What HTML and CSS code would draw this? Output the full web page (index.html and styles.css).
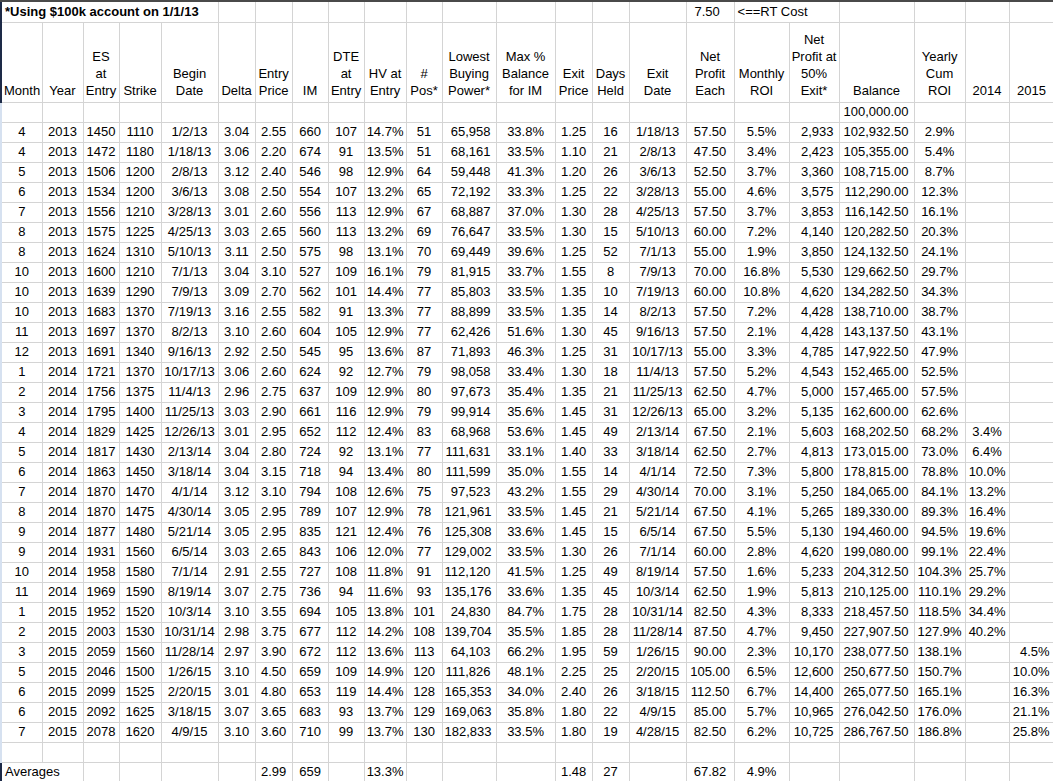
FILE: index.html
```html
<!DOCTYPE html>
<html>
<head>
<meta charset="utf-8">
<link rel="stylesheet" href="styles.css">
</head>
<body>
<table class="sheet">
<colgroup>
<col style="width:41px"><col style="width:41px"><col style="width:36px"><col style="width:42px"><col style="width:57px"><col style="width:37px"><col style="width:37px"><col style="width:36px"><col style="width:36px"><col style="width:42px"><col style="width:36px"><col style="width:54px"><col style="width:59px"><col style="width:37px"><col style="width:37px"><col style="width:57px"><col style="width:48px"><col style="width:55px"><col style="width:50px"><col style="width:75px"><col style="width:51px"><col style="width:44px"><col style="width:45px">
</colgroup>
<tr class="title">
<td colspan="5" class="ttl edge-dark">*Using $100k account on 1/1/13</td>
<td></td><td></td><td></td><td></td><td></td><td></td><td></td><td></td><td></td><td></td><td></td>
<td class="rt">7.50</td>
<td colspan="2" class="lt">&lt;==RT Cost</td>
<td></td><td></td><td></td><td></td>
</tr>
<tr class="head">
<td class="edge-dark">Month</td><td>Year</td><td>ES<br>at<br>Entry</td><td>Strike</td><td>Begin<br>Date</td><td>Delta</td><td>Entry<br>Price</td><td>IM</td><td>DTE<br>at<br>Entry</td><td>HV at<br>Entry</td><td>#<br>Pos*</td><td>Lowest<br>Buying<br>Power*</td><td>Max %<br>Balance<br>for IM</td><td>Exit<br>Price</td><td>Days<br>Held</td><td>Exit<br>Date</td><td>Net<br>Profit<br>Each</td><td>Monthly<br>ROI</td><td>Net<br>Profit at<br>50%<br>Exit*</td><td>Balance</td><td>Yearly<br>Cum<br>ROI</td><td>2014</td><td>2015</td>
</tr>
<tr class="data">
<td></td><td></td><td></td><td></td><td></td><td></td><td></td><td></td><td></td><td></td><td></td><td></td><td></td><td></td><td></td><td></td><td></td><td></td><td></td><td>100,000.00</td><td></td><td></td><td></td>
</tr>
<tr class="data"><td>4</td><td>2013</td><td>1450</td><td>1110</td><td>1/2/13</td><td>3.04</td><td>2.55</td><td>660</td><td>107</td><td>14.7%</td><td>51</td><td>65,958</td><td>33.8%</td><td>1.25</td><td>16</td><td>1/18/13</td><td>57.50</td><td>5.5%</td><td>2,933</td><td>102,932.50</td><td>2.9%</td><td></td><td></td></tr>
<tr class="data"><td>4</td><td>2013</td><td>1472</td><td>1180</td><td>1/18/13</td><td>3.06</td><td>2.20</td><td>674</td><td>91</td><td>13.5%</td><td>51</td><td>68,161</td><td>33.5%</td><td>1.10</td><td>21</td><td>2/8/13</td><td>47.50</td><td>3.4%</td><td>2,423</td><td>105,355.00</td><td>5.4%</td><td></td><td></td></tr>
<tr class="data"><td>5</td><td>2013</td><td>1506</td><td>1200</td><td>2/8/13</td><td>3.12</td><td>2.40</td><td>546</td><td>98</td><td>12.9%</td><td>64</td><td>59,448</td><td>41.3%</td><td>1.20</td><td>26</td><td>3/6/13</td><td>52.50</td><td>3.7%</td><td>3,360</td><td>108,715.00</td><td>8.7%</td><td></td><td></td></tr>
<tr class="data"><td>6</td><td>2013</td><td>1534</td><td>1200</td><td>3/6/13</td><td>3.08</td><td>2.50</td><td>554</td><td>107</td><td>13.2%</td><td>65</td><td>72,192</td><td>33.3%</td><td>1.25</td><td>22</td><td>3/28/13</td><td>55.00</td><td>4.6%</td><td>3,575</td><td>112,290.00</td><td>12.3%</td><td></td><td></td></tr>
<tr class="data"><td>7</td><td>2013</td><td>1556</td><td>1210</td><td>3/28/13</td><td>3.01</td><td>2.60</td><td>556</td><td>113</td><td>12.9%</td><td>67</td><td>68,887</td><td>37.0%</td><td>1.30</td><td>28</td><td>4/25/13</td><td>57.50</td><td>3.7%</td><td>3,853</td><td>116,142.50</td><td>16.1%</td><td></td><td></td></tr>
<tr class="data"><td>8</td><td>2013</td><td>1575</td><td>1225</td><td>4/25/13</td><td>3.03</td><td>2.65</td><td>560</td><td>113</td><td>13.2%</td><td>69</td><td>76,647</td><td>33.5%</td><td>1.30</td><td>15</td><td>5/10/13</td><td>60.00</td><td>7.2%</td><td>4,140</td><td>120,282.50</td><td>20.3%</td><td></td><td></td></tr>
<tr class="data"><td>8</td><td>2013</td><td>1624</td><td>1310</td><td>5/10/13</td><td>3.11</td><td>2.50</td><td>575</td><td>98</td><td>13.1%</td><td>70</td><td>69,449</td><td>39.6%</td><td>1.25</td><td>52</td><td>7/1/13</td><td>55.00</td><td>1.9%</td><td>3,850</td><td>124,132.50</td><td>24.1%</td><td></td><td></td></tr>
<tr class="data"><td>10</td><td>2013</td><td>1600</td><td>1210</td><td>7/1/13</td><td>3.04</td><td>3.10</td><td>527</td><td>109</td><td>16.1%</td><td>79</td><td>81,915</td><td>33.7%</td><td>1.55</td><td>8</td><td>7/9/13</td><td>70.00</td><td>16.8%</td><td>5,530</td><td>129,662.50</td><td>29.7%</td><td></td><td></td></tr>
<tr class="data"><td>10</td><td>2013</td><td>1639</td><td>1290</td><td>7/9/13</td><td>3.09</td><td>2.70</td><td>562</td><td>101</td><td>14.4%</td><td>77</td><td>85,803</td><td>33.5%</td><td>1.35</td><td>10</td><td>7/19/13</td><td>60.00</td><td>10.8%</td><td>4,620</td><td>134,282.50</td><td>34.3%</td><td></td><td></td></tr>
<tr class="data"><td>10</td><td>2013</td><td>1683</td><td>1370</td><td>7/19/13</td><td>3.16</td><td>2.55</td><td>582</td><td>91</td><td>13.3%</td><td>77</td><td>88,899</td><td>33.5%</td><td>1.35</td><td>14</td><td>8/2/13</td><td>57.50</td><td>7.2%</td><td>4,428</td><td>138,710.00</td><td>38.7%</td><td></td><td></td></tr>
<tr class="data"><td>11</td><td>2013</td><td>1697</td><td>1370</td><td>8/2/13</td><td>3.10</td><td>2.60</td><td>604</td><td>105</td><td>12.9%</td><td>77</td><td>62,426</td><td>51.6%</td><td>1.30</td><td>45</td><td>9/16/13</td><td>57.50</td><td>2.1%</td><td>4,428</td><td>143,137.50</td><td>43.1%</td><td></td><td></td></tr>
<tr class="data"><td>12</td><td>2013</td><td>1691</td><td>1340</td><td>9/16/13</td><td>2.92</td><td>2.50</td><td>545</td><td>95</td><td>13.6%</td><td>87</td><td>71,893</td><td>46.3%</td><td>1.25</td><td>31</td><td>10/17/13</td><td>55.00</td><td>3.3%</td><td>4,785</td><td>147,922.50</td><td>47.9%</td><td></td><td></td></tr>
<tr class="data"><td>1</td><td>2014</td><td>1721</td><td>1370</td><td>10/17/13</td><td>3.06</td><td>2.60</td><td>624</td><td>92</td><td>12.7%</td><td>79</td><td>98,058</td><td>33.4%</td><td>1.30</td><td>18</td><td>11/4/13</td><td>57.50</td><td>5.2%</td><td>4,543</td><td>152,465.00</td><td>52.5%</td><td></td><td></td></tr>
<tr class="data"><td>2</td><td>2014</td><td>1756</td><td>1375</td><td>11/4/13</td><td>2.96</td><td>2.75</td><td>637</td><td>109</td><td>12.9%</td><td>80</td><td>97,673</td><td>35.4%</td><td>1.35</td><td>21</td><td>11/25/13</td><td>62.50</td><td>4.7%</td><td>5,000</td><td>157,465.00</td><td>57.5%</td><td></td><td></td></tr>
<tr class="data"><td>3</td><td>2014</td><td>1795</td><td>1400</td><td>11/25/13</td><td>3.03</td><td>2.90</td><td>661</td><td>116</td><td>12.9%</td><td>79</td><td>99,914</td><td>35.6%</td><td>1.45</td><td>31</td><td>12/26/13</td><td>65.00</td><td>3.2%</td><td>5,135</td><td>162,600.00</td><td>62.6%</td><td></td><td></td></tr>
<tr class="data"><td>4</td><td>2014</td><td>1829</td><td>1425</td><td>12/26/13</td><td>3.01</td><td>2.95</td><td>652</td><td>112</td><td>12.4%</td><td>83</td><td>68,968</td><td>53.6%</td><td>1.45</td><td>49</td><td>2/13/14</td><td>67.50</td><td>2.1%</td><td>5,603</td><td>168,202.50</td><td>68.2%</td><td>3.4%</td><td></td></tr>
<tr class="data"><td>5</td><td>2014</td><td>1817</td><td>1430</td><td>2/13/14</td><td>3.04</td><td>2.80</td><td>724</td><td>92</td><td>13.1%</td><td>77</td><td>111,631</td><td>33.1%</td><td>1.40</td><td>33</td><td>3/18/14</td><td>62.50</td><td>2.7%</td><td>4,813</td><td>173,015.00</td><td>73.0%</td><td>6.4%</td><td></td></tr>
<tr class="data"><td>6</td><td>2014</td><td>1863</td><td>1450</td><td>3/18/14</td><td>3.04</td><td>3.15</td><td>718</td><td>94</td><td>13.4%</td><td>80</td><td>111,599</td><td>35.0%</td><td>1.55</td><td>14</td><td>4/1/14</td><td>72.50</td><td>7.3%</td><td>5,800</td><td>178,815.00</td><td>78.8%</td><td>10.0%</td><td></td></tr>
<tr class="data"><td>7</td><td>2014</td><td>1870</td><td>1470</td><td>4/1/14</td><td>3.12</td><td>3.10</td><td>794</td><td>108</td><td>12.6%</td><td>75</td><td>97,523</td><td>43.2%</td><td>1.55</td><td>29</td><td>4/30/14</td><td>70.00</td><td>3.1%</td><td>5,250</td><td>184,065.00</td><td>84.1%</td><td>13.2%</td><td></td></tr>
<tr class="data"><td>8</td><td>2014</td><td>1870</td><td>1475</td><td>4/30/14</td><td>3.05</td><td>2.95</td><td>789</td><td>107</td><td>12.9%</td><td>78</td><td>121,961</td><td>33.5%</td><td>1.45</td><td>21</td><td>5/21/14</td><td>67.50</td><td>4.1%</td><td>5,265</td><td>189,330.00</td><td>89.3%</td><td>16.4%</td><td></td></tr>
<tr class="data"><td>9</td><td>2014</td><td>1877</td><td>1480</td><td>5/21/14</td><td>3.05</td><td>2.95</td><td>835</td><td>121</td><td>12.4%</td><td>76</td><td>125,308</td><td>33.6%</td><td>1.45</td><td>15</td><td>6/5/14</td><td>67.50</td><td>5.5%</td><td>5,130</td><td>194,460.00</td><td>94.5%</td><td>19.6%</td><td></td></tr>
<tr class="data"><td>9</td><td>2014</td><td>1931</td><td>1560</td><td>6/5/14</td><td>3.03</td><td>2.65</td><td>843</td><td>106</td><td>12.0%</td><td>77</td><td>129,002</td><td>33.5%</td><td>1.30</td><td>26</td><td>7/1/14</td><td>60.00</td><td>2.8%</td><td>4,620</td><td>199,080.00</td><td>99.1%</td><td>22.4%</td><td></td></tr>
<tr class="data"><td>10</td><td>2014</td><td>1958</td><td>1580</td><td>7/1/14</td><td>2.91</td><td>2.55</td><td>727</td><td>108</td><td>11.8%</td><td>91</td><td>112,120</td><td>41.5%</td><td>1.25</td><td>49</td><td>8/19/14</td><td>57.50</td><td>1.6%</td><td>5,233</td><td>204,312.50</td><td>104.3%</td><td>25.7%</td><td></td></tr>
<tr class="data"><td>11</td><td>2014</td><td>1969</td><td>1590</td><td>8/19/14</td><td>3.07</td><td>2.75</td><td>736</td><td>94</td><td>11.6%</td><td>93</td><td>135,176</td><td>33.6%</td><td>1.35</td><td>45</td><td>10/3/14</td><td>62.50</td><td>1.9%</td><td>5,813</td><td>210,125.00</td><td>110.1%</td><td>29.2%</td><td></td></tr>
<tr class="data"><td>1</td><td>2015</td><td>1952</td><td>1520</td><td>10/3/14</td><td>3.10</td><td>3.55</td><td>694</td><td>105</td><td>13.8%</td><td>101</td><td>24,830</td><td>84.7%</td><td>1.75</td><td>28</td><td>10/31/14</td><td>82.50</td><td>4.3%</td><td>8,333</td><td>218,457.50</td><td>118.5%</td><td>34.4%</td><td></td></tr>
<tr class="data"><td>2</td><td>2015</td><td>2003</td><td>1530</td><td>10/31/14</td><td>2.98</td><td>3.75</td><td>677</td><td>112</td><td>14.2%</td><td>108</td><td>139,704</td><td>35.5%</td><td>1.85</td><td>28</td><td>11/28/14</td><td>87.50</td><td>4.7%</td><td>9,450</td><td>227,907.50</td><td>127.9%</td><td>40.2%</td><td></td></tr>
<tr class="data"><td>3</td><td>2015</td><td>2059</td><td>1560</td><td>11/28/14</td><td>2.97</td><td>3.90</td><td>672</td><td>112</td><td>13.6%</td><td>113</td><td>64,103</td><td>66.2%</td><td>1.95</td><td>59</td><td>1/26/15</td><td>90.00</td><td>2.3%</td><td>10,170</td><td>238,077.50</td><td>138.1%</td><td></td><td>4.5%</td></tr>
<tr class="data"><td>5</td><td>2015</td><td>2046</td><td>1500</td><td>1/26/15</td><td>3.10</td><td>4.50</td><td>659</td><td>109</td><td>14.9%</td><td>120</td><td>111,826</td><td>48.1%</td><td>2.25</td><td>25</td><td>2/20/15</td><td>105.00</td><td>6.5%</td><td>12,600</td><td>250,677.50</td><td>150.7%</td><td></td><td>10.0%</td></tr>
<tr class="data"><td>6</td><td>2015</td><td>2099</td><td>1525</td><td>2/20/15</td><td>3.01</td><td>4.80</td><td>653</td><td>119</td><td>14.4%</td><td>128</td><td>165,353</td><td>34.0%</td><td>2.40</td><td>26</td><td>3/18/15</td><td>112.50</td><td>6.7%</td><td>14,400</td><td>265,077.50</td><td>165.1%</td><td></td><td>16.3%</td></tr>
<tr class="data"><td>6</td><td>2015</td><td>2092</td><td>1625</td><td>3/18/15</td><td>3.07</td><td>3.65</td><td>683</td><td>93</td><td>13.7%</td><td>129</td><td>169,063</td><td>35.8%</td><td>1.80</td><td>22</td><td>4/9/15</td><td>85.00</td><td>5.7%</td><td>10,965</td><td>276,042.50</td><td>176.0%</td><td></td><td>21.1%</td></tr>
<tr class="data"><td>7</td><td>2015</td><td>2078</td><td>1620</td><td>4/9/15</td><td>3.10</td><td>3.60</td><td>710</td><td>99</td><td>13.7%</td><td>130</td><td>182,833</td><td>33.5%</td><td>1.80</td><td>19</td><td>4/28/15</td><td>82.50</td><td>6.2%</td><td>10,725</td><td>286,767.50</td><td>186.8%</td><td></td><td>25.8%</td></tr>
<tr class="data"><td></td><td></td><td></td><td></td><td></td><td></td><td></td><td></td><td></td><td></td><td></td><td></td><td></td><td></td><td></td><td></td><td></td><td></td><td></td><td></td><td></td><td></td><td></td></tr>
<tr class="avg">
<td colspan="2" class="lt edge-dark">Averages</td><td></td><td></td><td></td><td></td><td>2.99</td><td>659</td><td></td><td>13.3%</td><td></td><td></td><td></td><td>1.48</td><td>27</td><td></td><td>67.82</td><td>4.9%</td><td></td><td></td><td></td><td></td><td></td>
</tr>
</table>
</body>
</html>
```
FILE: styles.css
```css
html, body {
  margin: 0;
  padding: 0;
  background: #ffffff;
}

.sheet {
  table-layout: fixed;
  border-collapse: collapse;
  width: 1053px;
  font-family: "Liberation Sans", Arial, sans-serif;
  font-size: 13px;
  color: #000000;
}

.sheet td {
  border: 1px solid #d4d4d4;
  padding: 0 2px 2px 2px;
  text-align: center;
  vertical-align: bottom;
  white-space: nowrap;
  overflow: visible;
  line-height: 16px;
}

.sheet tr {
  height: 20px;
}

.sheet .title td {
  border-top: 2px solid #4a4a4a;
  height: 18px;
}

.sheet .title .ttl {
  text-align: left;
  font-weight: bold;
  padding-left: 3px;
}

.sheet .title .rt {
  text-align: center;
  padding-right: 8px;
}

.sheet .lt {
  text-align: left;
  padding-left: 3px;
}

.sheet .head {
  height: 80px;
}

.sheet .head td {
  line-height: 17px;
  padding-bottom: 3px;
}

.sheet .data td:first-child {
  border-left: 2px solid #d6e1f0;
}

.sheet .edge-dark {
  border-left: 2px solid #1d2a47;
}

.sheet .data td:nth-child(12),
.sheet .data td:nth-child(19),
.sheet .data td:nth-child(20) {
  text-align: right;
  padding-right: 5px;
}

.sheet .data td:nth-child(23) {
  text-align: right;
  padding-right: 4px;
}
```
